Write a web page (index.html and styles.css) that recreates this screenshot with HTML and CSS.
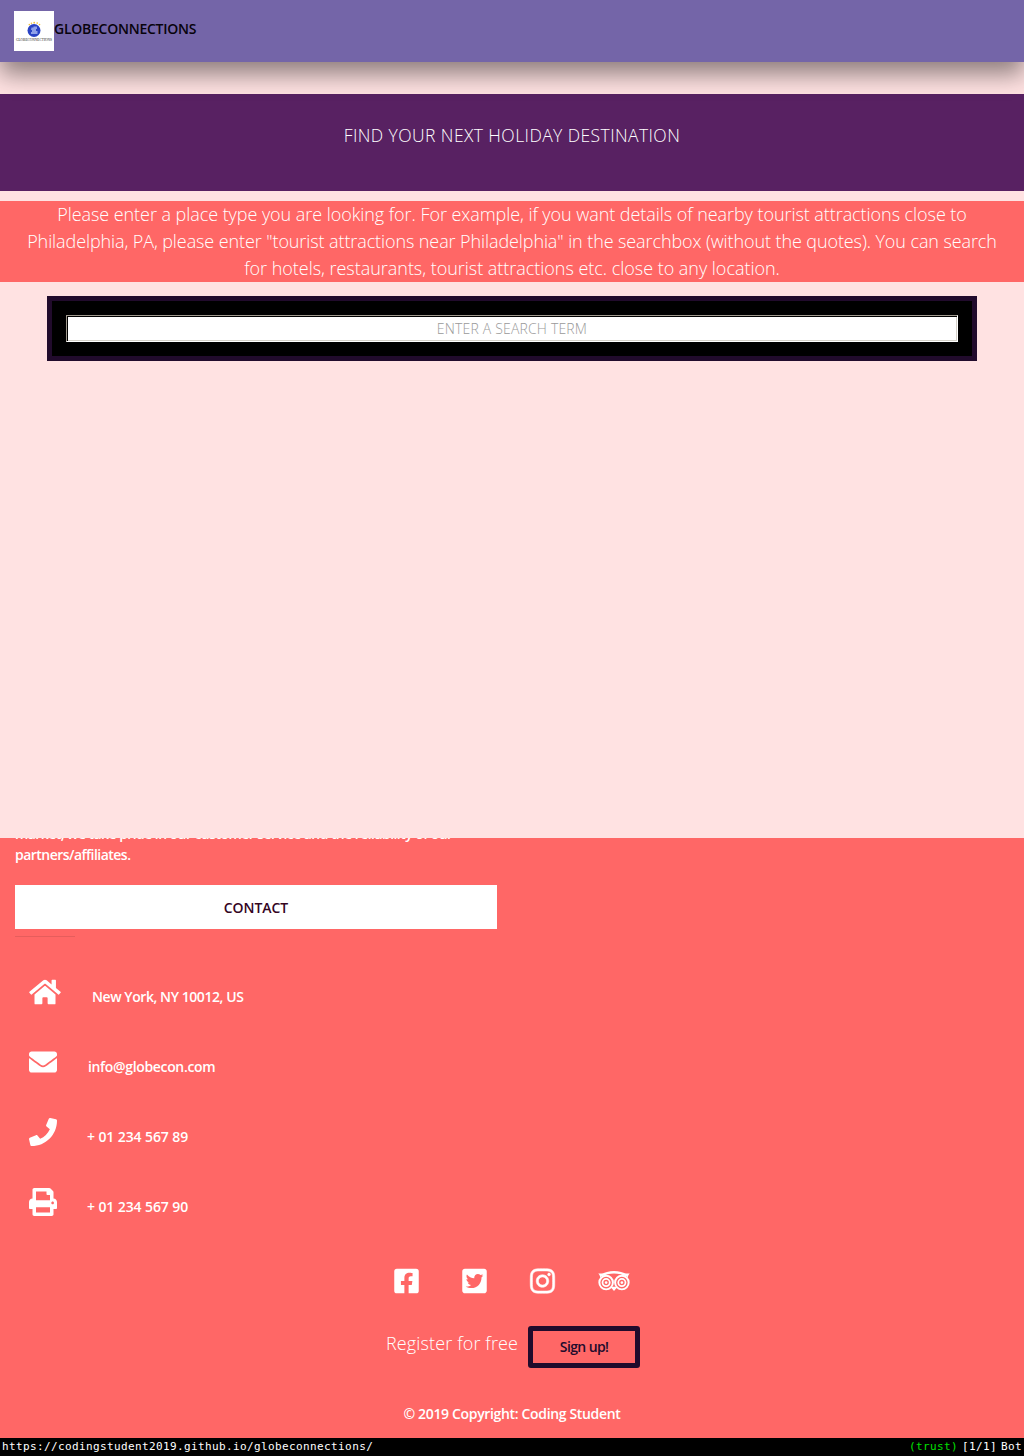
FILE: index.html
```html
<!DOCTYPE html>
<html lang="en">
<head>
<meta charset="utf-8">
<title>Globeconnections</title>
<link rel="stylesheet" href="styles.css">
</head>
<body>
<header class="navbar">
  <svg class="logo" viewBox="0 0 40 40" aria-hidden="true">
    <rect width="40" height="40" fill="#fff"/>
    <g fill="#f0c23c"><circle cx="15.3" cy="13.6" r=".8"/><circle cx="17.4" cy="12.2" r=".8"/><circle cx="20.2" cy="11.7" r=".9"/><circle cx="23.2" cy="12.1" r=".8"/><circle cx="25.5" cy="13.6" r=".8"/></g>
    <circle cx="20" cy="19.5" r="6.5" fill="#2942c4"/>
    <path d="M17.5 16.5h2v-1h3.5v2.500h-1v2h1.500v3h-6.500v-2h1v-2h-1z" fill="#8fa0e8"/>
    <text x="2" y="30" class="logo-text" textLength="36" lengthAdjust="spacingAndGlyphs">GLOBECONNECTIONS</text>
  </svg>
  <span class="brand">GLOBECONNECTIONS</span>
</header>
<main>
  <section class="hero"><h1 class="hero-title">FIND YOUR NEXT HOLIDAY DESTINATION</h1></section>
  <p class="intro"><span class="l1">Please enter a place type you are looking for. For example, if you want details of nearby tourist attractions close to</span><br><span class="l2">Philadelphia, PA, please enter "tourist attractions near Philadelphia" in the searchbox (without the quotes). You can search</span><br><span class="l3">for hotels, restaurants, tourist attractions etc. close to any location.</span></p>
  <div class="search"><input class="search-input" type="text" placeholder="ENTER A SEARCH TERM"></div>
</main>
<footer class="footer">
  <div class="column">
    <p class="about"><span class="about-line">market, we take pride in our customer service and the reliability of our</span><br><span class="about-end">partners/affiliates.</span></p>
    <h2 class="contact-title">CONTACT</h2>
    <hr class="rule">
    <ul class="contacts">
      <li class="contact home"><svg class="icon wide" viewBox="0 0 576 512"><path d="M280.37 148.26L96 300.11V464a16 16 0 0 0 16 16l112.06-.29a16 16 0 0 0 15.92-16V368a16 16 0 0 1 16-16h64a16 16 0 0 1 16 16v95.64a16 16 0 0 0 16 16.05L464 480a16 16 0 0 0 16-16V300L295.67 148.26a12.19 12.19 0 0 0-15.3 0zM571.6 251.47L488 182.56V44.05a12 12 0 0 0-12-12h-56a12 12 0 0 0-12 12v72.61L318.47 43a48 48 0 0 0-61 0L4.34 251.47a12 12 0 0 0-1.6 16.9l25.5 31A12 12 0 0 0 45.15 301l235.22-193.74a12.19 12.19 0 0 1 15.3 0L530.9 301a12 12 0 0 0 16.9-1.6l25.5-31a12 12 0 0 0-1.7-16.93z"/></svg><span class="detail">New York, NY 10012, US</span></li>
      <li class="contact mail"><svg class="icon" viewBox="0 0 512 512"><path d="M502.3 190.8c3.9-3.1 9.7-.2 9.7 4.7V400c0 26.5-21.5 48-48 48H48c-26.5 0-48-21.5-48-48V195.6c0-5 5.7-7.8 9.7-4.7 22.4 17.4 52.1 39.5 154.1 113.6 21.1 15.4 56.7 47.8 92.2 47.6 35.7.3 72-32.8 92.3-47.6 102-74.1 131.6-96.3 154-113.7zM256 320c23.2.4 56.6-29.2 73.4-41.4 132.7-96.3 142.8-104.7 173.4-128.7 5.8-4.5 9.2-11.5 9.2-18.9v-19c0-26.5-21.5-48-48-48H48c-26.5 0-48 21.5-48 48v19c0 7.4 3.4 14.3 9.2 18.9 30.6 23.9 40.7 32.4 173.4 128.7 16.8 12.2 50.2 41.8 73.4 41.4z"/></svg><span class="detail">info@globecon.com</span></li>
      <li class="contact phone"><svg class="icon" viewBox="0 0 512 512"><path d="M493.4 24.6l-104-24c-11.3-2.6-22.9 3.3-27.5 13.9l-48 112c-4.2 9.8-1.4 21.3 6.9 28l60.6 49.6c-36 76.7-98.9 140.5-177.2 177.2l-49.6-60.6c-6.8-8.3-18.2-11.1-28-6.9l-112 48C3.9 366.5-2 378.1.6 389.4l24 104C27.1 504.2 36.7 512 48 512c256.1 0 464-207.5 464-464 0-11.2-7.7-20.9-18.6-23.4z"/></svg><span class="detail">+ 01 234 567 89</span></li>
      <li class="contact phone"><svg class="icon" viewBox="0 0 512 512"><path d="M448 192V77.25c0-8.49-3.37-16.62-9.37-22.63L393.37 9.37c-6-6-14.14-9.37-22.63-9.37H96C78.33 0 64 14.33 64 32v160c-35.35 0-64 28.65-64 64v112c0 8.84 7.16 16 16 16h48v96c0 17.67 14.33 32 32 32h320c17.67 0 32-14.33 32-32v-96h48c8.84 0 16-7.16 16-16V256c0-35.35-28.65-64-64-64zm-64 256H128v-96h256v96zm0-224H128V64h192v48c0 8.84 7.16 16 16 16h48v96zm48 72c-13.25 0-24-10.75-24-24 0-13.26 10.75-24 24-24s24 10.74 24 24c0 13.25-10.75 24-24 24z"/></svg><span class="detail">+ 01 234 567 90</span></li>
    </ul>
  </div>
  <div class="socials">
    <svg class="icon narrow" viewBox="0 0 448 512"><path d="M400 32H48A48 48 0 0 0 0 80v352a48 48 0 0 0 48 48h137.25V327.69h-63V256h63v-54.64c0-62.15 37-96.48 93.67-96.48 27.14 0 55.52 4.84 55.52 4.84v61h-31.27c-30.81 0-40.42 19.12-40.42 38.73V256h68.78l-11 71.69h-57.78V480H400a48 48 0 0 0 48-48V80a48 48 0 0 0-48-48z"/></svg>
    <svg class="icon narrow" viewBox="0 0 448 512"><path d="M400 32H48C21.500 32 0 53.500 0 80v352c0 26.500 21.500 48 48 48h352c26.500 0 48-21.500 48-48V80c0-26.500-21.500-48-48-48zm-48.900 158.800c.2 2.800.2 5.700.2 8.500 0 86.700-66 186.600-186.600 186.600-37.200 0-71.700-10.800-100.700-29.400 5.300.6 10.400.8 15.800.8 30.700 0 58.900-10.400 81.400-28-28.800-.6-53-19.500-61.300-45.500 10.100 1.500 19.200 1.500 29.600-1.200-30-6.100-52.500-32.500-52.500-64.400v-.8c8.700 4.900 18.900 7.900 29.600 8.300a65.447 65.447 0 0 1-29.200-54.600c0-12.200 3.200-23.400 8.900-33.100 32.300 39.800 80.800 65.800 135.200 68.600-9.300-44.500 24-80.600 64-80.600 18.900 0 35.900 7.900 47.900 20.700 14.800-2.800 29-8.300 41.600-15.800-4.900 15.200-15.200 28-28.800 36.100 13.200-1.400 26-5.100 37.800-10.200-8.900 13.100-20.100 24.700-32.900 34z"/></svg>
    <svg class="icon narrow insta" viewBox="0 0 448 512"><path d="M224.1 141c-63.6 0-114.9 51.3-114.9 114.9s51.3 114.9 114.9 114.9S339 319.5 339 255.9 287.7 141 224.1 141zm0 189.6c-41.1 0-74.7-33.5-74.7-74.7s33.5-74.7 74.7-74.7 74.7 33.5 74.7 74.7-33.6 74.7-74.7 74.7zm146.4-194.3c0 14.9-12 26.8-26.8 26.8-14.9 0-26.8-12-26.8-26.8s12-26.8 26.8-26.8 26.8 12 26.8 26.8zm76.1 27.2c-1.7-35.9-9.900-67.700-36.200-93.900-26.200-26.200-58-34.400-93.900-36.200-37-2.100-147.900-2.100-184.900 0-35.800 1.700-67.600 9.900-93.900 36.100s-34.400 58-36.200 93.900c-2.100 37-2.100 147.900 0 184.900 1.700 35.900 9.900 67.700 36.200 93.900s58 34.400 93.900 36.200c37 2.100 147.900 2.100 184.900 0 35.900-1.700 67.700-9.900 93.900-36.200 26.200-26.200 34.400-58 36.200-93.900 2.100-37 2.100-147.800 0-184.800zM398.800 388c-7.800 19.600-22.900 34.700-42.600 42.600-29.500 11.700-99.500 9-132.100 9s-102.700 2.600-132.100-9c-19.600-7.800-34.700-22.900-42.600-42.600-11.700-29.500-9-99.500-9-132.100s-2.600-102.700 9-132.100c7.800-19.600 22.900-34.700 42.600-42.600 29.500-11.700 99.500-9 132.100-9s102.700-2.600 132.100 9c19.600 7.800 34.700 22.900 42.600 42.600 11.700 29.500 9 99.500 9 132.100s2.700 102.700-9 132.100z"/></svg>
    <svg class="icon wide" viewBox="0 0 576 512"><g fill="none" stroke="#fff"><circle cx="144" cy="285" r="124" stroke-width="36"/><circle cx="432" cy="285" r="124" stroke-width="36"/><circle cx="144" cy="285" r="66" stroke-width="32"/><circle cx="432" cy="285" r="66" stroke-width="32"/><path d="M58 158C190 75 386 75 518 158" stroke-width="42"/></g><path d="M0 119h102l-62 76C32 162 18 139 0 119zM576 119H474l62 76c8-33 22-56 40-76zM222 360h132l-66 80z"/><circle cx="144" cy="285" r="24"/><circle cx="432" cy="285" r="24"/></svg>
  </div>
  <div class="register"><span class="register-text">Register for free</span><a class="signup">Sign up!</a></div>
  <p class="copyright">© 2019 Copyright: Coding Student</p>
</footer>
<div class="statusbar"><span class="url">https://codingstudent2019.github.io/globeconnections/</span><span class="status"><span class="trust">(trust)</span><span>[1/1]</span><span>Bot</span></span></div>
</body>
</html>
```
FILE: styles.css
```css
* { box-sizing: border-box; }
body { margin: 0; background: #ffe2e2; font: 600 14px/21px "Open Sans", "Noto Sans", sans-serif; color: #fff; }
p, h1, h2, ul { margin: 0; padding: 0; }
.navbar { position: relative; display: flex; height: 62px; padding: 11px 14px; background: #7465a8; box-shadow: 0 12px 24px rgba(0,0,0,.45); }
.logo { width: 40px; height: 40px; }
.logo-text { font: 4.5px "Liberation Serif", serif; fill: #222; }
.brand { margin-top: 7px; color: #08030c; letter-spacing: -.25px; }
main { height: 776px; padding-top: 32px; }
.hero { height: 97px; padding-top: 28px; background: #582162; text-align: center; }
.hero-title { font-size: 17.5px; font-weight: 300; line-height: 27px; letter-spacing: .42px; white-space: nowrap; }
.intro { height: 81px; margin-top: 10px; background: #ff6766; text-align: center; font-size: 18px; font-weight: 300; line-height: 27px; white-space: nowrap; }
.l1 { letter-spacing: -.06px; }
.l2 { letter-spacing: -.1px; }
.l3 { letter-spacing: -.03px; }
.search { display: flex; height: 65px; margin: 14px 47px 0; padding: 14px; border: 5px solid #210b2c; background: #000; }
.search-input { width: 100%; height: 27px; padding: 1px 2px; border: 1px solid; border-color: #a09a8e #fff #fff #a09a8e; background: #fff; box-shadow: inset 1px 1px #000, inset -1px -1px #d4d0c8; text-align: center; font: 300 14px "Open Sans", "Noto Sans", sans-serif; letter-spacing: .18px; }
.search-input::placeholder { color: #999; opacity: 1; }
.footer { height: 600px; overflow: hidden; background: #ff6766; }
.column { width: 512px; padding: 0 15px; }
.about { height: 42px; margin-top: -15px; white-space: nowrap; }
.about-line { letter-spacing: -.56px; }
.about-end { letter-spacing: -.53px; }
.contact-title { height: 44px; margin-top: 20px; background: #fff; color: #34051f; text-align: center; font-size: 14px; font-weight: 600; line-height: 45px; letter-spacing: -.05px; }
.rule { width: 60px; height: 1px; margin: 7px 0 0; border: 0; background: #e65d5c; }
.contacts { padding: 41px 0 0 14px; list-style: none; }
.contact { display: flex; height: 70px; letter-spacing: -.43px; }
.contact.mail { letter-spacing: -.34px; }
.contact.phone { letter-spacing: -.1px; }
.icon { flex: none; width: 28px; height: 28px; fill: #fff; }
.icon.wide { width: 32px; }
.icon.narrow { width: 25px; }
.insta { stroke: #fff; stroke-width: 10px; overflow: visible; }
.detail { margin: 8px 0 0 31px; white-space: nowrap; }
.phone .detail { margin-left: 30px; }
.socials { display: flex; justify-content: center; gap: 43px; margin-top: 9px; }
.register { display: flex; justify-content: center; gap: 10px; margin-top: 31px; padding-left: 2px; }
.register-text { padding-top: 4px; font-size: 18px; font-weight: 300; line-height: 27px; letter-spacing: .14px; white-space: nowrap; }
.signup { width: 112px; height: 42px; border: 5px solid #210b2c; border-radius: 3px; color: #210b2c; text-align: center; line-height: 32px; letter-spacing: -.6px; }
.copyright { margin-top: 35px; text-align: center; letter-spacing: -.34px; }
.statusbar { display: flex; justify-content: space-between; height: 18px; padding: 0 2px; background: #000; font: 11px/18px "DejaVu Sans Mono", monospace; letter-spacing: .38px; white-space: nowrap; }
.status { display: flex; gap: 4px; }
.trust { color: #00e000; }
```
